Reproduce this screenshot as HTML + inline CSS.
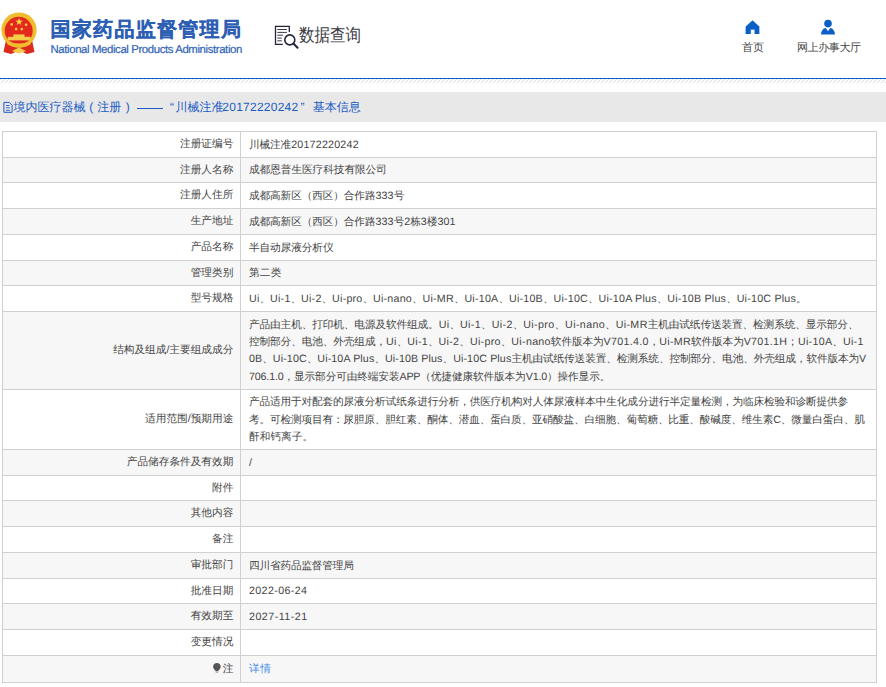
<!DOCTYPE html>
<html><head><meta charset="utf-8">
<style>
*{margin:0;padding:0;box-sizing:border-box}
html,body{width:886px;height:687px;overflow:hidden;background:#fff;font-family:"Liberation Sans",sans-serif;color:#333;position:relative;text-rendering:geometricPrecision}
div,svg{position:absolute}
#emb{left:0;top:0}
#t1{left:50.5px;top:16px;font-size:20px;line-height:28px;font-weight:bold;color:#2c5fb4;white-space:nowrap;letter-spacing:1.3px;-webkit-text-stroke:0.25px #2c5fb4}
#t2{left:50.5px;top:43.3px;font-size:11.4px;line-height:14px;color:#2e63b6;white-space:nowrap;letter-spacing:-0.39px;-webkit-text-stroke:0.2px #2e63b6}
#sq{left:272px;top:22px}
#sqt{left:299px;top:22.7px;font-size:18px;line-height:24px;color:#3b3b44;white-space:nowrap;transform-origin:0 0;transform:scaleX(0.862)}
.nav{top:40.3px;font-size:11px;line-height:16px;color:#444;white-space:nowrap}
#line{left:0;top:78px;width:886px;height:1px;background:#0b5fc6}
#hatch{left:0;top:79px}
#bar{left:0;top:92px;width:886px;height:30px;background:#e8e8e8}
.bc{top:98px;font-size:12px;line-height:18px;color:#1a5bc4;white-space:nowrap}
#doc{left:0;top:96px}
.bg{left:2px;width:875px}
.hl{left:2px;width:875px;height:1px;background:#d0cfd1}
.vline{top:131px;width:1px;height:552px;background:#d0cfd1}
.lb{right:652.7px;font-size:10.67px;line-height:17.33px;color:#444;white-space:nowrap;text-align:right}
.vl{left:249px;font-size:10.67px;line-height:17.33px;color:#444;white-space:nowrap}
a{color:#3b8ae8;text-decoration:none}
.pin{display:inline-block;width:7px;height:8px;background:#555;border-radius:50% 50% 50% 50%/60% 60% 40% 40%;margin-right:1px;vertical-align:-1px}
</style></head><body>
<svg id="emb" width="40" height="56" viewBox="0 0 40 56">
  <path d="M6 40 L3.5 52 L11 54 L19 50.5 L27 54 L34.5 52 L32 40 Z" fill="#dc2a1e"/>
  <circle cx="19" cy="30" r="17.6" fill="#efbd2e"/>
  <circle cx="18.7" cy="30.8" r="14" fill="#e3291e"/>
  <path d="M6.5 40 Q19 47 31.5 40 L30.5 44.5 Q19 51 7.5 44.5 Z" fill="#efbd2e"/>
  <rect x="7.7" y="36.8" width="22.8" height="3.6" fill="#f3cd4a"/>
  <rect x="13.4" y="34.4" width="11.1" height="2.6" fill="#f3cd4a"/>
  <path d="M12 51 L19 47.5 L26 51 L19 53.5 Z" fill="#f3cd4a"/>
  <path d="M19.1 18 l1 2.6 2.7 0.1 -2.1 1.7 0.8 2.6 -2.4 -1.5 -2.3 1.5 0.7 -2.6 -2.1 -1.7 2.7 -0.1z" fill="#f3d040"/>
  <circle cx="11.7" cy="24.4" r="1.3" fill="#f3d040"/><circle cx="16.1" cy="29.1" r="1.3" fill="#f3d040"/>
  <circle cx="21.8" cy="29.1" r="1.3" fill="#f3d040"/><circle cx="26.1" cy="24.7" r="1.3" fill="#f3d040"/>
</svg>
<div id="t1">国家药品监督管理局</div>
<div id="t2">National Medical Products Administration</div>
<svg id="sq" width="30" height="28" viewBox="0 0 30 28">
  <path d="M3.5 10.8 V22.3 H10.8" fill="none" stroke="#25243a" stroke-width="1.3"/>
  <path d="M3.5 11 V4.3 H17.3 V10" fill="none" stroke="#25243a" stroke-width="1.3"/>
  <path d="M5.3 7.5 H14.9 M5.3 10.4 H14.9 M5.3 13.2 H11 M5.3 16.1 H9.8 M5.3 18.8 H9.8" stroke="#3a3a4c" stroke-width="1"/>
  <circle cx="17.8" cy="17.9" r="5" fill="none" stroke="#25243a" stroke-width="1.6"/>
  <path d="M21.6 21.7 L25.6 25.7" stroke="#25243a" stroke-width="2.1" stroke-linecap="round"/>
</svg>
<div id="sqt">数据查询</div>
<svg style="left:745px;top:20px" width="15" height="14" viewBox="0 0 15 14"><path d="M7.5 0.6 L14.2 6.6 V14 H9.7 V9.6 H5.7 V14 H0.8 V6.6 Z" fill="#0b5fc6" stroke="#0b5fc6" stroke-width="0.3" stroke-linejoin="round"/></svg>
<div class="nav" style="left:742px">首页</div>
<svg style="left:820px;top:19px" width="16" height="16" viewBox="0 0 16 16"><circle cx="8" cy="4.6" r="3.8" fill="#0b5fc6"/><path d="M1 15.6 C1.2 11.6 3.2 9.2 5.8 8.9 L8 12.2 L10.2 8.9 C12.8 9.2 14.8 11.6 15 15.6 Z" fill="#0b5fc6"/></svg>
<div class="nav" style="left:797px;letter-spacing:-0.38px">网上办事大厅</div>
<div id="line"></div>
<svg id="hatch" width="886" height="4"><defs><pattern id="hp" width="4" height="4" patternUnits="userSpaceOnUse"><path d="M0 5 L5 0 M-4 5 L1 0" stroke="#e4e4e4" stroke-width="1.2"/></pattern></defs><rect width="886" height="4" fill="url(#hp)"/></svg>
<div id="bar"></div>
<svg id="doc" width="20" height="22" viewBox="0 0 20 22"><path d="M3.9 6.4 H9.3 L12.1 9.2 V16.3 H3.9 Z" fill="none" stroke="#1d5bc6" stroke-width="1"/><path d="M6 9.5 H9.6 M6 11.8 H9.9 M6 14.4 H9.9" stroke="#1d5bc6" stroke-width="0.9"/></svg>
<div class="bc" style="left:13.5px">境内医疗器械</div>
<div class="bc" style="left:89.3px">(</div>
<div class="bc" style="left:97.3px">注册</div>
<div class="bc" style="left:125.7px">)</div>
<div style="left:137.3px;top:108px;width:25.7px;height:1px;background:#1a5bc4"></div>
<div class="bc" style="left:170px">&#8220;</div>
<div class="bc" style="left:175.6px">川械注准</div>
<div class="bc" id="bcn" style="left:222.3px;letter-spacing:0.25px">20172220242</div>
<div class="bc" style="left:300.5px">&#8221;</div>
<div class="bc" style="left:312.7px">基本信息</div>
<div class="bg" style="top:132px;height:25px;background:#fff"></div>
<div class="bg" style="top:158px;height:24px;background:#f7f7f7"></div>
<div class="bg" style="top:183px;height:25px;background:#fff"></div>
<div class="bg" style="top:209px;height:25px;background:#f7f7f7"></div>
<div class="bg" style="top:235px;height:25px;background:#fff"></div>
<div class="bg" style="top:261px;height:24px;background:#f7f7f7"></div>
<div class="bg" style="top:286px;height:25px;background:#fff"></div>
<div class="bg" style="top:312px;height:77px;background:#f7f7f7"></div>
<div class="bg" style="top:390px;height:59px;background:#fff"></div>
<div class="bg" style="top:450px;height:25px;background:#f7f7f7"></div>
<div class="bg" style="top:476px;height:24px;background:#fff"></div>
<div class="bg" style="top:501px;height:25px;background:#f7f7f7"></div>
<div class="bg" style="top:527px;height:25px;background:#fff"></div>
<div class="bg" style="top:553px;height:25px;background:#f7f7f7"></div>
<div class="bg" style="top:579px;height:24px;background:#fff"></div>
<div class="bg" style="top:604px;height:25px;background:#f7f7f7"></div>
<div class="bg" style="top:630px;height:25px;background:#fff"></div>
<div class="bg" style="top:656px;height:26px;background:#f7f7f7"></div>
<div class="hl" style="top:131px"></div>
<div class="hl" style="top:157px"></div>
<div class="hl" style="top:182px"></div>
<div class="hl" style="top:208px"></div>
<div class="hl" style="top:234px"></div>
<div class="hl" style="top:260px"></div>
<div class="hl" style="top:285px"></div>
<div class="hl" style="top:311px"></div>
<div class="hl" style="top:389px"></div>
<div class="hl" style="top:449px"></div>
<div class="hl" style="top:475px"></div>
<div class="hl" style="top:500px"></div>
<div class="hl" style="top:526px"></div>
<div class="hl" style="top:552px"></div>
<div class="hl" style="top:578px"></div>
<div class="hl" style="top:603px"></div>
<div class="hl" style="top:629px"></div>
<div class="hl" style="top:655px"></div>
<div class="hl" style="top:682px"></div>
<div class="lb" style="top:136.24px">注册证编号</div>
<div class="vl" id="v0_0" style="top:136.64px;letter-spacing:-0.12px">川械注准<span style="letter-spacing:0.223px">20172220242</span></div>
<div class="lb" style="top:161.74px">注册人名称</div>
<div class="vl" id="v1_0" style="top:162.14px;letter-spacing:-0.058px">成都恩普生医疗科技有限公司</div>
<div class="lb" style="top:187.24px">注册人住所</div>
<div class="vl" id="v2_0" style="top:187.64px;letter-spacing:-0.12px">成都高新区（西区）合作路<span style="letter-spacing:0.150px">333</span>号</div>
<div class="lb" style="top:213.24px">生产地址</div>
<div class="vl" id="v3_0" style="top:213.64px;letter-spacing:-0.12px">成都高新区（西区）合作路<span style="letter-spacing:0.150px">333</span>号<span style="letter-spacing:0.150px">2</span>栋<span style="letter-spacing:0.150px">3</span>楼<span style="letter-spacing:0.150px">301</span></div>
<div class="lb" style="top:239.24px">产品名称</div>
<div class="vl" id="v4_0" style="top:239.64px;letter-spacing:-0.100px">半自动尿液分析仪</div>
<div class="lb" style="top:264.74px">管理类别</div>
<div class="vl" id="v5_0" style="top:265.13px;letter-spacing:0.200px">第二类</div>
<div class="lb" style="top:290.24px">型号规格</div>
<div class="vl" id="v6_0" style="top:290.63px;letter-spacing:-0.12px"><span style="letter-spacing:0.231px">Ui</span>、<span style="letter-spacing:0.231px">Ui-1</span>、<span style="letter-spacing:0.231px">Ui-2</span>、<span style="letter-spacing:0.231px">Ui-pro</span>、<span style="letter-spacing:0.231px">Ui-nano</span>、<span style="letter-spacing:0.231px">Ui-MR</span>、<span style="letter-spacing:0.231px">Ui-10A</span>、<span style="letter-spacing:0.231px">Ui-10B</span>、<span style="letter-spacing:0.231px">Ui-10C</span>、<span style="letter-spacing:0.231px">Ui-10A Plus</span>、<span style="letter-spacing:0.231px">Ui-10B Plus</span>、<span style="letter-spacing:0.231px">Ui-10C Plus</span>。</div>
<div class="lb" style="top:342.24px">结构及组成/主要组成成分</div>
<div class="vl" id="v7_0" style="top:316.64px;letter-spacing:-0.12px">产品由主机、打印机、电源及软件组成。<span style="letter-spacing:0.379px">Ui</span>、<span style="letter-spacing:0.379px">Ui-1</span>、<span style="letter-spacing:0.379px">Ui-2</span>、<span style="letter-spacing:0.379px">Ui-pro</span>、<span style="letter-spacing:0.379px">Ui-nano</span>、<span style="letter-spacing:0.379px">Ui-MR</span>主机由试纸传送装置、检测系统、显示部分、</div>
<div class="vl" id="v7_1" style="top:333.97px;letter-spacing:-0.12px">控制部分、电池、外壳组成，<span style="letter-spacing:0.312px">Ui</span>、<span style="letter-spacing:0.312px">Ui-1</span>、<span style="letter-spacing:0.312px">Ui-2</span>、<span style="letter-spacing:0.312px">Ui-pro</span>、<span style="letter-spacing:0.312px">Ui-nano</span>软件版本为<span style="letter-spacing:0.312px">V701.4.0</span>，<span style="letter-spacing:0.312px">Ui-MR</span>软件版本为<span style="letter-spacing:0.312px">V701.1H</span>；<span style="letter-spacing:0.312px">Ui-10A</span>、<span style="letter-spacing:0.312px">Ui-1</span></div>
<div class="vl" id="v7_2" style="top:351.30px;letter-spacing:-0.12px"><span style="letter-spacing:0.126px">0B</span>、<span style="letter-spacing:0.126px">Ui-10C</span>、<span style="letter-spacing:0.126px">Ui-10A Plus</span>、<span style="letter-spacing:0.126px">Ui-10B Plus</span>、<span style="letter-spacing:0.126px">Ui-10C Plus</span>主机由试纸传送装置、检测系统、控制部分、电池、外壳组成，软件版本为<span style="letter-spacing:0.126px">V</span></div>
<div class="vl" id="v7_3" style="top:368.63px;letter-spacing:-0.12px"><span style="letter-spacing:-0.150px">706.1.0</span>，显示部分可由终端安装<span style="letter-spacing:-0.150px">APP</span>（优捷健康软件版本为<span style="letter-spacing:-0.150px">V1.0</span>）操作显示。</div>
<div class="lb" style="top:411.24px">适用范围/预期用途</div>
<div class="vl" id="v8_0" style="top:394.31px;letter-spacing:-0.146px">产品适用于对配套的尿液分析试纸条进行分析，供医疗机构对人体尿液样本中生化成分进行半定量检测，为临床检验和诊断提供参</div>
<div class="vl" id="v8_1" style="top:411.63px;letter-spacing:-0.172px">考。可检测项目有：尿胆原、胆红素、酮体、潜血、蛋白质、亚硝酸盐、白细胞、葡萄糖、比重、酸碱度、维生素C、微量白蛋白、肌</div>
<div class="vl" id="v8_2" style="top:428.97px;letter-spacing:0.040px">酐和钙离子。</div>
<div class="lb" style="top:454.24px">产品储存条件及有效期</div>
<div class="vl" id="v9_0" style="top:454.63px;letter-spacing:0.000px">/</div>
<div class="lb" style="top:479.74px">附件</div>
<div class="lb" style="top:505.23px">其他内容</div>
<div class="lb" style="top:531.24px">备注</div>
<div class="lb" style="top:557.24px">审批部门</div>
<div class="vl" id="v13_0" style="top:557.63px;letter-spacing:-0.178px">四川省药品监督管理局</div>
<div class="lb" style="top:582.74px">批准日期</div>
<div class="vl" id="v14_0" style="top:583.13px;letter-spacing:0.378px">2022-06-24</div>
<div class="lb" style="top:608.24px">有效期至</div>
<div class="vl" id="v15_0" style="top:608.63px;letter-spacing:0.489px">2027-11-21</div>
<div class="lb" style="top:634.24px">变更情况</div>
<svg style="left:212px;top:662px" width="10" height="12" viewBox="0 0 10 12"><path d="M4.9 0.9 C2.7 0.9 1.1 2.6 1.1 4.7 C1.1 6.3 2.2 7.3 3.3 8.6 L3.6 9.3 H6.2 L6.5 8.6 C7.6 7.3 8.7 6.3 8.7 4.7 C8.7 2.6 7.1 0.9 4.9 0.9 Z" fill="#555"/><rect x="3.7" y="9.6" width="2.4" height="1.1" fill="#999"/></svg>
<div class="lb" style="top:660.74px">注</div>
<div class="vl" id="v17_0" style="top:661.13px;letter-spacing:0.500px"><a>详情</a></div>
<div class="vline" style="left:2px"></div>
<div class="vline" style="left:240px"></div>
<div class="vline" style="left:876px"></div>
</body></html>
